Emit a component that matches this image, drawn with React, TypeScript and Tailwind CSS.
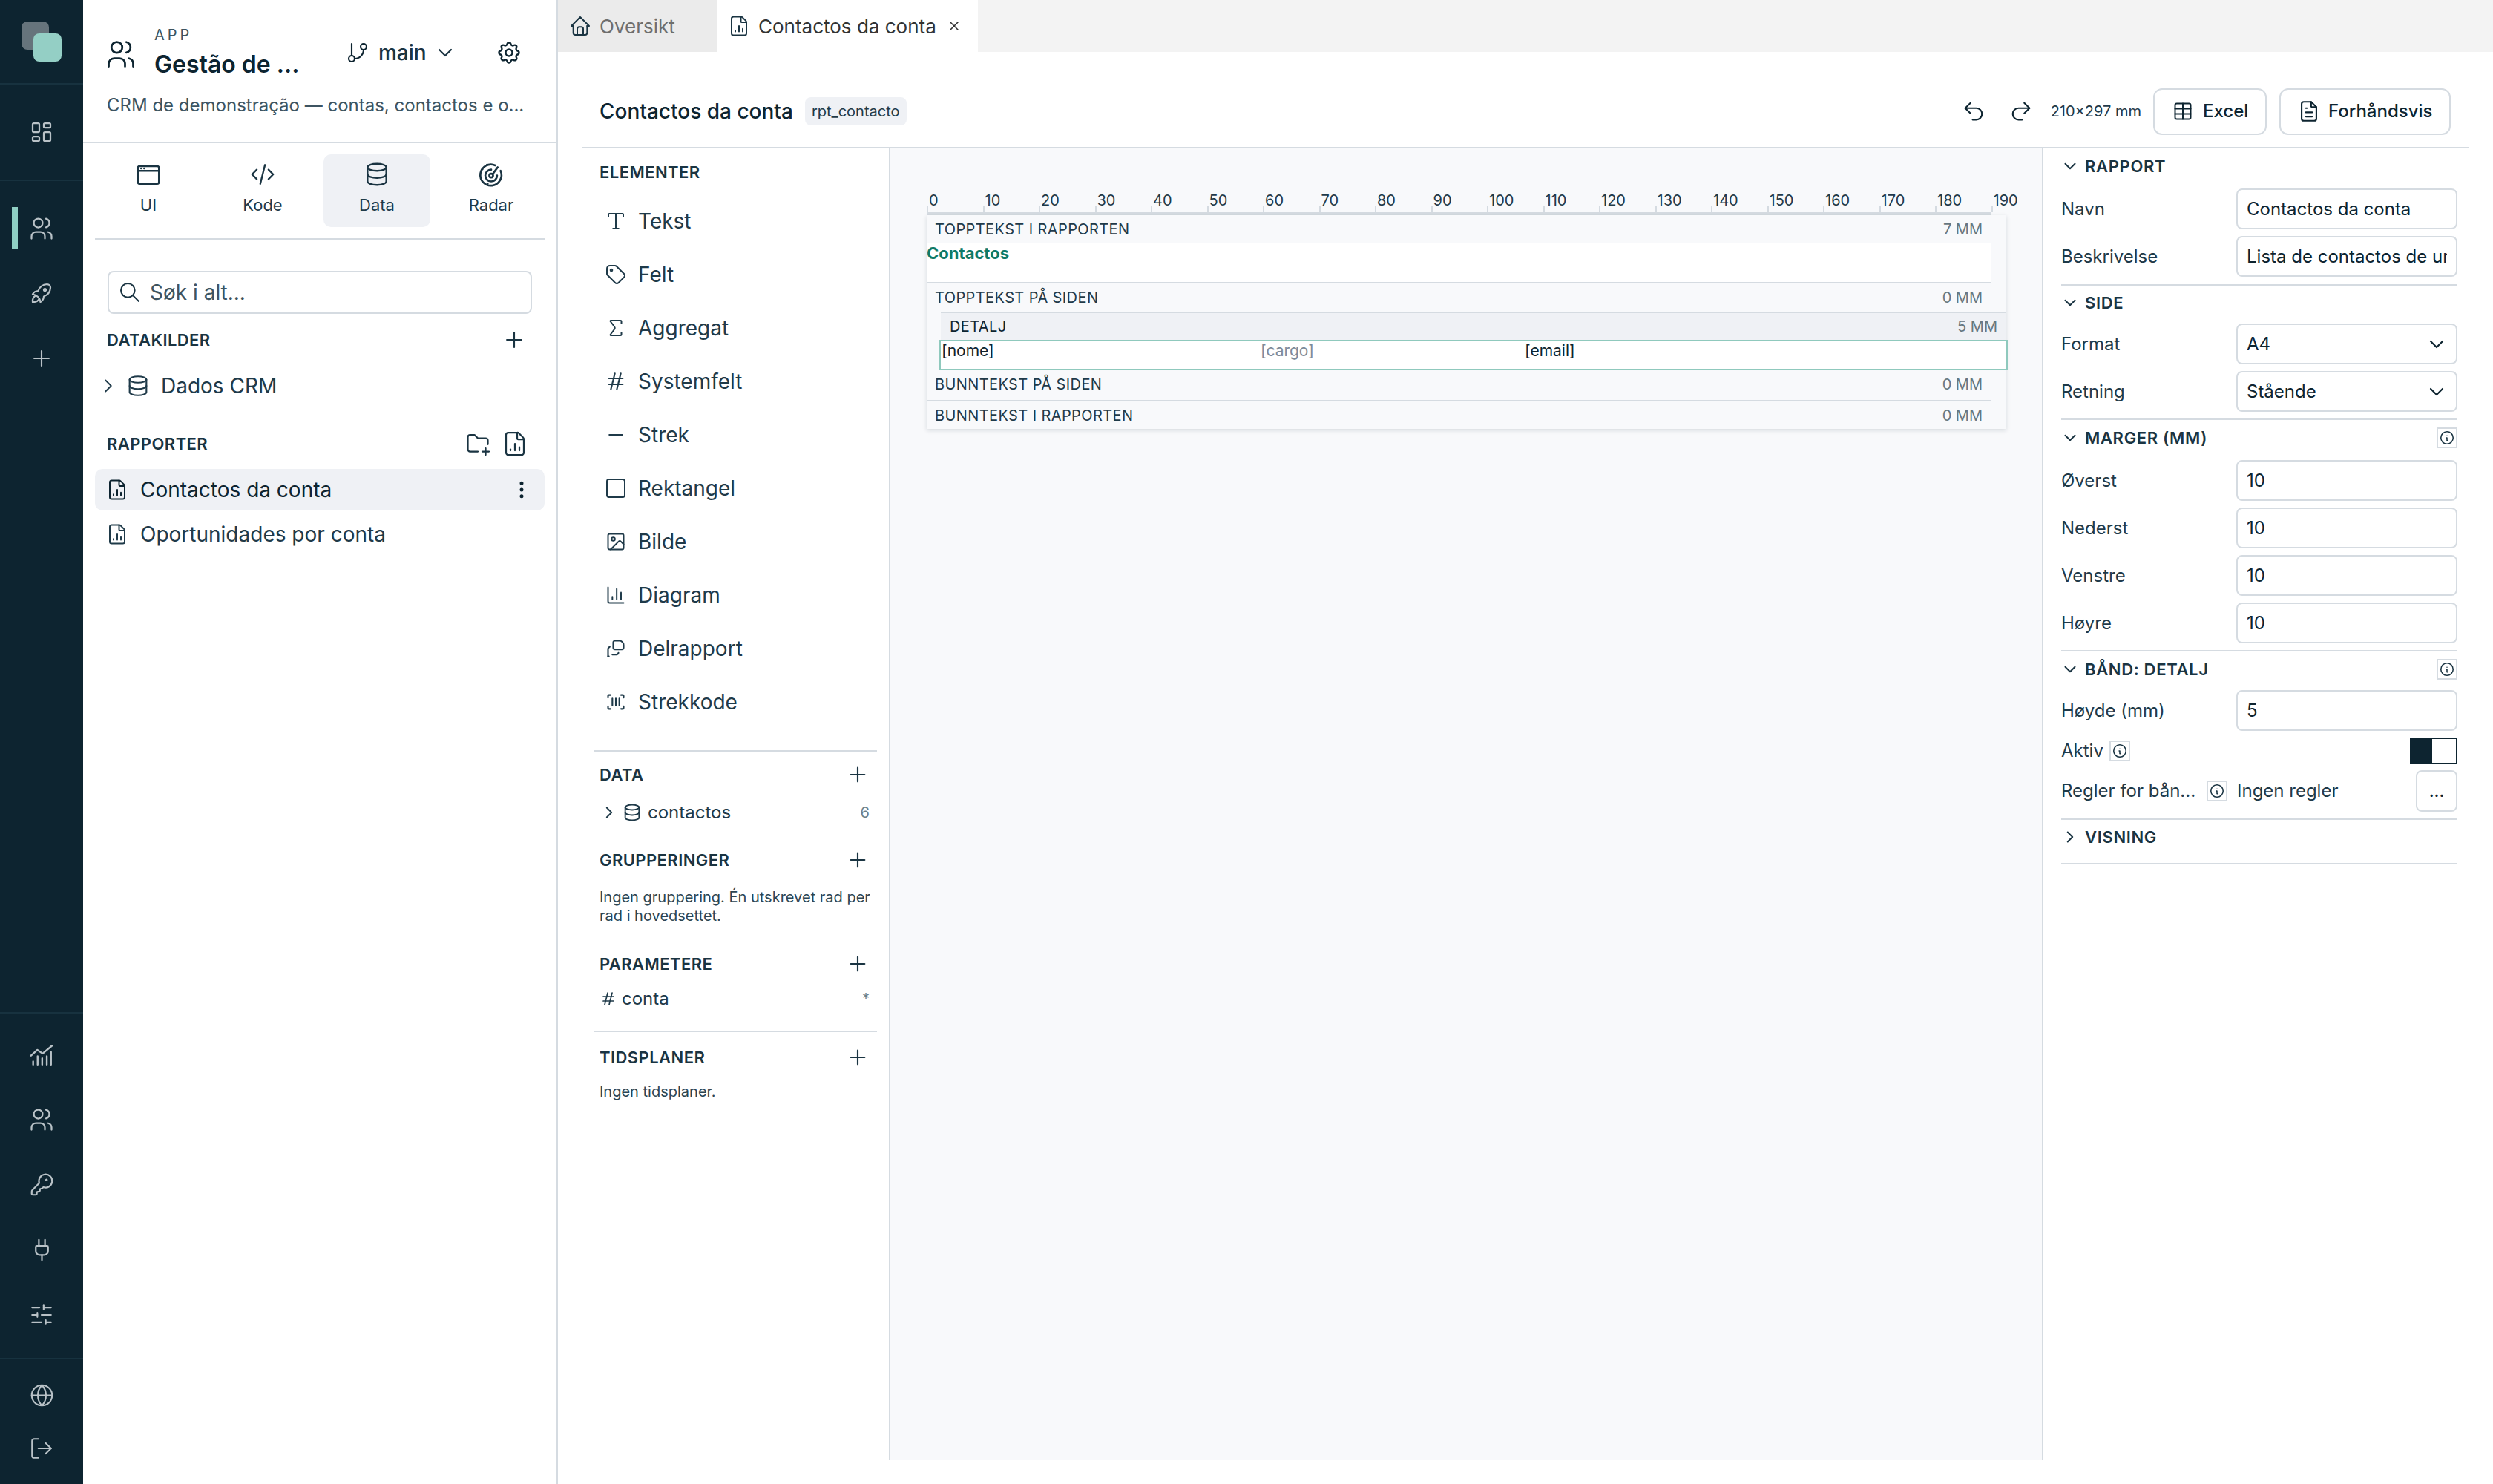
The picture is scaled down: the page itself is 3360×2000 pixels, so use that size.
import type { ReactNode } from "react";
import {
  ChartColumn,
  FileChartColumn,
  GitBranch,
  Globe,
  Image,
  KeyRound,
  LogOut,
  Plug,
  Redo2,
  Sigma,
  SlidersHorizontal,
  Table,
  Type,
  Undo2,
} from "lucide-react";
import {
  TbChevronDown,
  TbChevronRight,
  TbCode,
  TbDatabase,
  TbDotsVertical,
  TbFileText,
  TbFolderPlus,
  TbHash,
  TbHome,
  TbInfoCircle,
  TbLayoutDashboard,
  TbMinus,
  TbPlus,
  TbRocket,
  TbSearch,
  TbSettings,
  TbSquare,
  TbTag,
  TbUsers,
  TbX,
} from "react-icons/tb";

function SubreportIcon({ size = 24 }: { size?: number }) {
  return (
    <svg width={size} height={size} viewBox="0 0 24 24" fill="none" stroke="currentColor" strokeWidth="1.8" strokeLinecap="round" strokeLinejoin="round">
      <path d="M11 3h5a5 5 0 0 1 5 5v3a2 2 0 0 1-2 2h-8a2 2 0 0 1-2-2V5a2 2 0 0 1 2-2z" />
      <path d="M3 21v-8a3 3 0 0 1 2-3" />
      <path d="M3 21h1M8 19h5a3 3 0 0 0 2-2" />
    </svg>
  );
}

function BarcodeIcon({ size = 28 }: { size?: number }) {
  return (
    <svg width={size} height={size} viewBox="0 0 24 24" fill="none" stroke="currentColor" strokeWidth="1.8" strokeLinecap="round" strokeLinejoin="round">
      <path d="M6 4H4a1 1 0 0 0-1 1v2M18 4h2a1 1 0 0 1 1 1v2M6 20H4a1 1 0 0 1-1-1v-2M18 20h2a1 1 0 0 0 1-1v-2" />
      <path d="M8 8v8M12 8v8M16 8v8" />
    </svg>
  );
}

function WindowIcon({ size = 38 }: { size?: number }) {
  return (
    <svg width={size} height={size} viewBox="0 0 24 24" fill="none" stroke="currentColor" strokeWidth="1.6" strokeLinecap="round" strokeLinejoin="round">
      <rect x="3" y="5" width="18" height="15" rx="1.5" />
      <path d="M3 9h18" />
      <path d="M5.8 7h.01M8.4 7h.01" />
    </svg>
  );
}

function RadarIcon({ size = 38 }: { size?: number }) {
  return (
    <svg width={size} height={size} viewBox="0 0 24 24" fill="none" stroke="currentColor" strokeWidth="1.7" strokeLinecap="round" strokeLinejoin="round">
      <circle cx="12" cy="13" r="1.6" />
      <path d="M13.2 11.8 17.5 6" />
      <path d="M15.5 4.4A9 9 0 1 0 20 9" />
      <path d="M12 8a5 5 0 1 0 5 5" />
      <path d="M4.6 7.5h.01M8.5 3.8h.01M9 20h.01" />
    </svg>
  );
}

function TrendBarsIcon({ size = 34 }: { size?: number }) {
  return (
    <svg width={size} height={size} viewBox="0 0 24 24" fill="none" stroke="currentColor" strokeWidth="1.7" strokeLinecap="round" strokeLinejoin="round">
      <path d="M2 12.5 8 7l5 3.5L22 3" />
      <path d="M4 21v-3M8.3 21v-8M12.6 21v-6M17 21v-8M21 21V9" />
    </svg>
  );
}

function RailIcon({ children, active }: { children: ReactNode; active?: boolean }) {
  return (
    <div className="relative flex h-[87.5px] w-full items-center justify-center text-[#b9c2c7]">
      {active && <div className="absolute left-[16px] top-[15px] h-[56px] w-[8px] bg-[#8fcfc3]" />}
      {children}
    </div>
  );
}

function Rail() {
  return (
    <div className="flex h-full w-[112px] shrink-0 flex-col bg-[#0d2430]">
      <div className="h-[114px] shrink-0 border-b-2 border-[#17323f] pl-[29px] pt-[29px]">
        <div className="relative h-[54px] w-[54px]">
          <div className="h-[38px] w-[37px] rounded-[8px] bg-[#66747c]" />
          <div className="absolute left-[16px] top-[16px] h-[38px] w-[38px] rounded-[8px] bg-[#94cfc5]" />
        </div>
      </div>
      <div className="flex h-[130px] shrink-0 items-center justify-center border-b-2 border-[#17323f] text-[#b9c2c7]">
        <TbLayoutDashboard size={36} strokeWidth={1.5} />
      </div>
      <div className="mt-[20px]">
        <RailIcon active><TbUsers size={36} strokeWidth={1.5} /></RailIcon>
        <RailIcon><TbRocket size={36} strokeWidth={1.5} /></RailIcon>
        <RailIcon><TbPlus size={34} strokeWidth={1.5} /></RailIcon>
      </div>
      <div className="flex-1" />
      <div className="h-[466px] shrink-0 border-t-2 border-[#17323f] pt-[12px]">
        <RailIcon><TrendBarsIcon size={34} /></RailIcon>
        <RailIcon><TbUsers size={36} strokeWidth={1.5} /></RailIcon>
        <RailIcon><KeyRound size={33} strokeWidth={1.6} /></RailIcon>
        <RailIcon><Plug size={33} strokeWidth={1.6} /></RailIcon>
        <RailIcon><SlidersHorizontal size={34} strokeWidth={1.5} /></RailIcon>
      </div>
      <div className="h-[170px] shrink-0 border-t-2 border-[#17323f] pt-[12px]">
        <div className="flex h-[72px] items-center justify-center text-[#b9c2c7]">
          <Globe size={33} strokeWidth={1.5} />
        </div>
        <div className="flex h-[72px] items-center justify-center text-[#b9c2c7]">
          <LogOut size={34} strokeWidth={1.5} />
        </div>
      </div>
    </div>
  );
}

function ModeTab({ icon, label, active }: { icon: ReactNode; label: string; active?: boolean }) {
  return (
    <div className={`flex h-[98px] w-[144px] flex-col items-center rounded-[10px] pt-[8px] text-[#1a3442] ${active ? "bg-[#eff1f5]" : ""}`}>
      <div className="flex h-[38px] items-center">{icon}</div>
      <div className="mt-[7px] text-[22px] leading-[30px] text-[#1f3a49]">{label}</div>
    </div>
  );
}

function Sidebar() {
  return (
    <div className="flex h-full w-[640px] shrink-0 flex-col border-r-2 border-[#d5dbe1]">
      <div className="h-[193px] shrink-0 border-b-2 border-[#d5dbe1] pl-[33px] pt-[35px]">
        <div className="flex h-[72px] items-center">
          <TbUsers size={44} strokeWidth={1.5} className="-ml-[4px] mt-[4px] text-[#0d2430]" />
          <div className="ml-[23px] w-[258px]">
            <div className="h-[24px] text-[20px] leading-[24px] tracking-[0.2em] text-[#3d5461]">APP</div>
            <div className="mt-[8px] h-[40px] text-[32px] font-semibold leading-[40px] text-[#0d2430]">Gestão de ...</div>
          </div>
          <GitBranch size={32} strokeWidth={1.6} className="text-[#0d2430]" />
          <div className="ml-[12px] w-[63px] text-[28px] font-medium leading-[40px] text-[#1a3442]">main</div>
          <TbChevronDown size={32} strokeWidth={1.6} className="ml-[11px] text-[#1a3442]" />
          <TbSettings size={36} strokeWidth={1.6} className="ml-[52px] text-[#0d2430]" />
        </div>
        <div className="-ml-[1px] mt-[17px] whitespace-nowrap text-[24px] leading-[36px] text-[#3d5461]">CRM de demonstração — contas, contactos e o...</div>
      </div>
      <div className="mx-[16px] flex h-[130px] shrink-0 gap-[10px] border-b-2 border-[#d5dbe1] pt-[15px]">
        <ModeTab icon={<WindowIcon size={38} />} label="UI" />
        <ModeTab icon={<TbCode size={38} strokeWidth={1.5} />} label="Kode" />
        <ModeTab active icon={<TbDatabase size={38} strokeWidth={1.5} />} label="Data" />
        <ModeTab icon={<RadarIcon size={38} />} label="Radar" />
      </div>
      <div className="mx-[33px] mt-[42px] flex h-[58px] items-center rounded-[8px] border-2 border-[#d5dbe1] pl-[12px]">
        <TbSearch size={32} strokeWidth={1.5} className="text-[#1a3442]" />
        <span className="ml-[11px] text-[28px] text-[#3d5461]">Søk i alt...</span>
      </div>
      <div className="ml-[32px] mr-[40px] mt-[21px] flex h-[28px] items-center justify-between text-[#1a3442]">
        <span className="text-[22px] font-semibold tracking-[0.02em]">DATAKILDER</span>
        <TbPlus size={34} strokeWidth={1.5} />
      </div>
      <div className="ml-[33px] mt-[24px] flex h-[48px] items-center text-[#1f3a49]">
        <TbChevronRight size={30} strokeWidth={1.5} className="-ml-[14px]" />
        <TbDatabase size={34} strokeWidth={1.5} className="ml-[8px]" />
        <span className="ml-[14px] text-[28px]">Dados CRM</span>
      </div>
      <div className="ml-[32px] mr-[38px] mt-[40px] flex h-[28px] items-center justify-between text-[#1a3442]">
        <span className="text-[22px] font-semibold tracking-[0.02em]">RAPPORTER</span>
        <div className="flex items-center gap-[14px]">
          <TbFolderPlus size={36} strokeWidth={1.5} />
          <FileChartColumn size={36} strokeWidth={1.5} />
        </div>
      </div>
      <div className="mx-[16px] mt-[20px] flex h-[56px] items-center rounded-[10px] bg-[#eff1f5] pl-[15px] pr-[16px] text-[#0d2430]">
        <FileChartColumn size={30} strokeWidth={1.6} />
        <span className="ml-[16px] flex-1 text-[28px]">Contactos da conta</span>
        <TbDotsVertical size={30} strokeWidth={2} />
      </div>
      <div className="mx-[16px] mt-[4px] flex h-[56px] items-center pl-[15px] text-[#1f3a49]">
        <FileChartColumn size={30} strokeWidth={1.6} />
        <span className="ml-[16px] text-[28px]">Oportunidades por conta</span>
      </div>
    </div>
  );
}

const elements = [
  { label: "Tekst", icon: <Type size={30} strokeWidth={1.6} className="shrink-0" /> },
  { label: "Felt", icon: <TbTag size={32} strokeWidth={1.5} className="shrink-0" /> },
  { label: "Aggregat", icon: <Sigma size={30} strokeWidth={1.6} className="shrink-0" /> },
  { label: "Systemfelt", icon: <TbHash size={32} strokeWidth={1.6} className="shrink-0" /> },
  { label: "Strek", icon: <TbMinus size={30} strokeWidth={1.7} className="shrink-0" /> },
  { label: "Rektangel", icon: <TbSquare size={32} strokeWidth={1.5} className="shrink-0" /> },
  { label: "Bilde", icon: <Image size={28} strokeWidth={1.7} className="shrink-0" /> },
  { label: "Diagram", icon: <ChartColumn size={28} strokeWidth={1.7} className="shrink-0" /> },
  { label: "Delrapport", icon: <span className="shrink-0"><SubreportIcon size={28} /></span> },
  { label: "Strekkode", icon: <span className="shrink-0"><BarcodeIcon size={28} /></span> },
];

function PanelHeading({ label }: { label: string }) {
  return (
    <div className="flex h-[28px] items-center justify-between pl-[24px] pr-[26px] text-[#1a3442]">
      <span className="text-[22px] font-semibold tracking-[0.02em]">{label}</span>
      <TbPlus size={32} strokeWidth={1.6} />
    </div>
  );
}

function ElementsPanel() {
  return (
    <div className="w-[416px] shrink-0 border-r-2 border-[#d5dbe1]">
      <div className="mt-[19px] pl-[24px] text-[22px] font-semibold leading-[26px] tracking-[0.02em] text-[#1a3442]">ELEMENTER</div>
      <div className="mt-[17px]">
        {elements.map((el) => (
          <div key={el.label} className="flex h-[72px] items-center pl-[34px] text-[#1f3a49]">
            <div className="flex w-[24px] items-center justify-center">{el.icon}</div>
            <span className="ml-[18px] text-[28px]">{el.label}</span>
          </div>
        ))}
      </div>
      <div className="mx-[16px] mt-[29px] h-[2px] w-[382px] bg-[#d5dbe1]" />
      <div className="mt-[17px]"><PanelHeading label="DATA" /></div>
      <div className="mt-[17px] flex h-[40px] items-center pl-[24px] pr-[26px] text-[#1f3a49]">
        <TbChevronRight size={26} strokeWidth={1.7} />
        <TbDatabase size={28} strokeWidth={1.6} className="ml-[4px]" />
        <span className="ml-[7px] flex-1 text-[24px]">contactos</span>
        <span className="text-[20px] text-[#6b7f8a]">6</span>
      </div>
      <div className="mt-[30px]"><PanelHeading label="GRUPPERINGER" /></div>
      <div className="mt-[24px] pl-[24px] pr-[8px] text-[20px] leading-[25px] text-[#2b4553]">
        Ingen gruppering. Én utskrevet rad per rad i hovedsettet.
      </div>
      <div className="mt-[38px]"><PanelHeading label="PARAMETERE" /></div>
      <div className="mt-[13px] flex h-[40px] items-center pl-[24px] pr-[26px] text-[#1f3a49]">
        <TbHash size={24} strokeWidth={1.7} />
        <span className="ml-[6px] flex-1 text-[24px]">conta</span>
        <span className="text-[20px] text-[#6b7f8a]">*</span>
      </div>
      <div className="mx-[16px] mt-[23px] h-[2px] w-[382px] bg-[#d5dbe1]" />
      <div className="mt-[20px]"><PanelHeading label="TIDSPLANER" /></div>
      <div className="mt-[20px] pl-[24px] text-[20px] leading-[25px] text-[#2b4553]">Ingen tidsplaner.</div>
    </div>
  );
}

const ticks = Array.from({ length: 20 }, (_, i) => i * 10);

function BandHeader({ label, size }: { label: string; size: string }) {
  return (
    <div className="flex h-[38px] items-center justify-between pl-[11px] pr-[32px] text-[20px] text-[#1f3a49]">
      <span className="tracking-[0.02em]">{label}</span>
      <span className="text-[#66777f]">{size}</span>
    </div>
  );
}

function Canvas() {
  return (
    <div className="min-w-0 flex-1 bg-[#f8f9fb] pl-[49px] pt-[60px]">
      <div className="flex h-[26px] w-[1435px]">
        {ticks.map((t) => (
          <div key={t} className="w-[75.5px] shrink-0">
            <div className="h-[18px] pl-[3px] text-[20px] leading-[20px] text-[#1f3a49]">{t}</div>
            <div className="h-[8px] w-[2px] bg-[#d5dbe1]" />
          </div>
        ))}
      </div>
      <div className="h-[4px] w-[1435px] bg-[#d5dbe1]" />
      <div className="h-[288px] w-[1455px] bg-[#f8f9fb] shadow-[0_2px_6px_rgba(13,36,48,0.14)]">
        <BandHeader label="TOPPTEKST I RAPPORTEN" size="7 MM" />
        <div className="h-[54px] w-[1435px] border-b-2 border-[#d5dbe1] bg-white text-[22px] font-bold leading-[26px] text-[#0f7a68]">Contactos</div>
        <BandHeader label="TOPPTEKST PÅ SIDEN" size="0 MM" />
        <div className="ml-[19px] flex h-[38px] items-center justify-between border-t-2 border-[#d5dbe1] bg-[#eff1f5] pl-[12px] pr-[12px] text-[20px] text-[#0d2430]">
          <span className="tracking-[0.02em]">DETALJ</span>
          <span className="text-[#66777f]">5 MM</span>
        </div>
        <div className="ml-[17px] flex h-[41px] w-[1440px] border-2 border-[#8fc9bd] bg-white pl-[1px] text-[21px] leading-[26px] text-[#0d2430]">
          <span className="w-[430px]">[nome]</span>
          <span className="w-[356px] text-[#7d8a99]">[cargo]</span>
          <span>[email]</span>
        </div>
        <div className="h-[42px] w-[1435px] border-b-2 border-[#d5dbe1]">
          <div className="-mr-[20px] h-[40px]"><BandHeader label="BUNNTEKST PÅ SIDEN" size="0 MM" /></div>
        </div>
        <BandHeader label="BUNNTEKST I RAPPORTEN" size="0 MM" />
      </div>
    </div>
  );
}

function InfoButton() {
  return (
    <div className="flex h-[28px] w-[28px] items-center justify-center border-2 border-[#d5dbe1] text-[#1a3442]">
      <TbInfoCircle size={22} strokeWidth={1.7} className="shrink-0" />
    </div>
  );
}

function SectionHeader({ label, open = true, info, short }: { label: string; open?: boolean; info?: boolean; short?: boolean }) {
  return (
    <div className={`flex items-center text-[#1a3442] ${short ? "h-[46px]" : "h-[48px]"}`}>
      <div className="-ml-[1px] mr-[7px] flex w-[26px] items-center justify-center">
        {open ? <TbChevronDown size={26} strokeWidth={1.8} /> : <TbChevronRight size={26} strokeWidth={1.8} />}
      </div>
      <span className="flex-1 text-[22px] font-semibold tracking-[0.03em]">{label}</span>
      {info && <InfoButton />}
    </div>
  );
}

function Field({ label, value, select }: { label: string; value: string; select?: boolean }) {
  return (
    <div className="flex h-[55px] items-center">
      <span className="w-[236px] text-[24px] text-[#1f3a49]">{label}</span>
      <div className="flex h-[55px] w-[298px] items-center rounded-[8px] border-2 border-[#d5dbe1] pl-[12px] pr-[12px]">
        {select ? (
          <>
            <span className="flex-1 text-[24px] text-[#0d2430]">{value}</span>
            <TbChevronDown size={32} strokeWidth={1.6} className="-mr-[2px] text-[#0d2430]" />
          </>
        ) : (
          <input readOnly value={value} className="w-full bg-transparent text-[24px] text-[#0d2430] outline-none" />
        )}
      </div>
    </div>
  );
}

function Divider({ top }: { top: string }) {
  return <div className={`h-[2px] bg-[#d5dbe1] ${top}`} />;
}

function Inspector() {
  return (
    <div className="w-[576px] shrink-0 border-l-2 border-[#d5dbe1] pl-[24px] pr-[16px]">
      <SectionHeader label="RAPPORT" />
      <div className="mt-[6px] flex flex-col gap-[9px]">
        <Field label="Navn" value="Contactos da conta" />
        <Field label="Beskrivelse" value="Lista de contactos de uma conta" />
      </div>
      <Divider top="mt-[10px]" />
      <SectionHeader label="SIDE" short />
      <div className="mt-[5px] flex flex-col gap-[9px]">
        <Field select label="Format" value="A4" />
        <Field select label="Retning" value="Stående" />
      </div>
      <Divider top="mt-[9px]" />
      <SectionHeader label="MARGER (MM)" info />
      <div className="mt-[6px] flex flex-col gap-[9px]">
        <Field label="Øverst" value="10" />
        <Field label="Nederst" value="10" />
        <Field label="Venstre" value="10" />
        <Field label="Høyre" value="10" />
      </div>
      <Divider top="mt-[9px]" />
      <SectionHeader label="BÅND: DETALJ" info />
      <div className="mt-[4px]"><Field label="Høyde (mm)" value="5" /></div>
      <div className="mt-[9px] flex h-[36px] items-center">
        <span className="text-[24px] text-[#1f3a49]">Aktiv</span>
        <div className="ml-[8px]"><InfoButton /></div>
        <div className="flex-1" />
        <div className="flex h-[36px] w-[64px] border-2 border-[#0d2430] bg-white">
          <div className="h-full w-[28px] bg-[#0d2430]" />
        </div>
      </div>
      <div className="mt-[8px] flex h-[56px] items-center">
        <span className="w-[196px] whitespace-nowrap text-[24px] text-[#1f3a49]">Regler for bån...</span>
        <InfoButton />
        <span className="ml-[13px] flex-1 text-[24px] text-[#1f3a49]">Ingen regler</span>
        <div className="flex h-[56px] w-[56px] items-center justify-center rounded-[8px] border-2 border-[#d5dbe1] text-[24px] text-[#0d2430]">...</div>
      </div>
      <Divider top="mt-[9px]" />
      <SectionHeader label="VISNING" open={false} short />
      <Divider top="mt-[12px]" />
    </div>
  );
}

function Main() {
  return (
    <div className="flex h-full min-w-0 flex-1 flex-col">
      <div className="flex h-[70px] shrink-0 bg-[#f3f3f3]">
        <div className="flex w-[214px] items-center bg-[#ebebeb] pl-[14px]">
          <TbHome size={32} strokeWidth={1.5} className="text-[#1a3442]" />
          <span className="ml-[10px] text-[26px] text-[#6e6e6e]">Oversikt</span>
        </div>
        <div className="flex w-[352px] items-center bg-white pl-[15px]">
          <FileChartColumn size={30} strokeWidth={1.6} className="text-[#1a3442]" />
          <span className="ml-[11px] text-[26px] text-[#333333]">Contactos da conta</span>
          <TbX size={20} strokeWidth={2} className="ml-[14px] text-[#333333]" />
        </div>
      </div>
      <div className="mx-[32px] flex h-[130px] shrink-0 items-center border-b-2 border-[#d5dbe1] pl-[24px] pr-[25px] pt-[32px]">
        <span className="text-[28px] font-medium text-[#0d2430]">Contactos da conta</span>
        <span className="ml-[16px] flex h-[38px] items-center rounded-[8px] bg-[#eff1f5] px-[9px] text-[20px] text-[#1f3a49]">rpt_contacto</span>
        <div className="flex-1" />
        <Undo2 size={34} strokeWidth={1.5} className="text-[#0d2430]" />
        <Redo2 size={34} strokeWidth={1.5} className="ml-[30px] text-[#0d2430]" />
        <span className="ml-[23px] text-[20px] text-[#1f3a49]">210×297 mm</span>
        <div className="ml-[16px] flex h-[63px] w-[153px] items-center rounded-[12px] border-2 border-[#d5dbe1] pl-[24px] text-[#0d2430]">
          <Table size={28} strokeWidth={1.7} />
          <span className="ml-[13px] text-[24px] font-medium">Excel</span>
        </div>
        <div className="ml-[17px] flex h-[63px] w-[231px] items-center rounded-[12px] border-2 border-[#d5dbe1] pl-[21px] text-[#0d2430]">
          <TbFileText size={34} strokeWidth={1.5} />
          <span className="ml-[9px] text-[24px] font-medium">Forhåndsvis</span>
        </div>
      </div>
      <div className="mx-[32px] flex h-[1767px] shrink-0">
        <ElementsPanel />
        <Canvas />
        <Inspector />
      </div>
    </div>
  );
}

export default function App() {
  return (
    <div className="flex h-[2000px] w-[3360px] overflow-hidden bg-white font-['Inter',sans-serif]">
      <Rail />
      <Sidebar />
      <Main />
    </div>
  );
}
